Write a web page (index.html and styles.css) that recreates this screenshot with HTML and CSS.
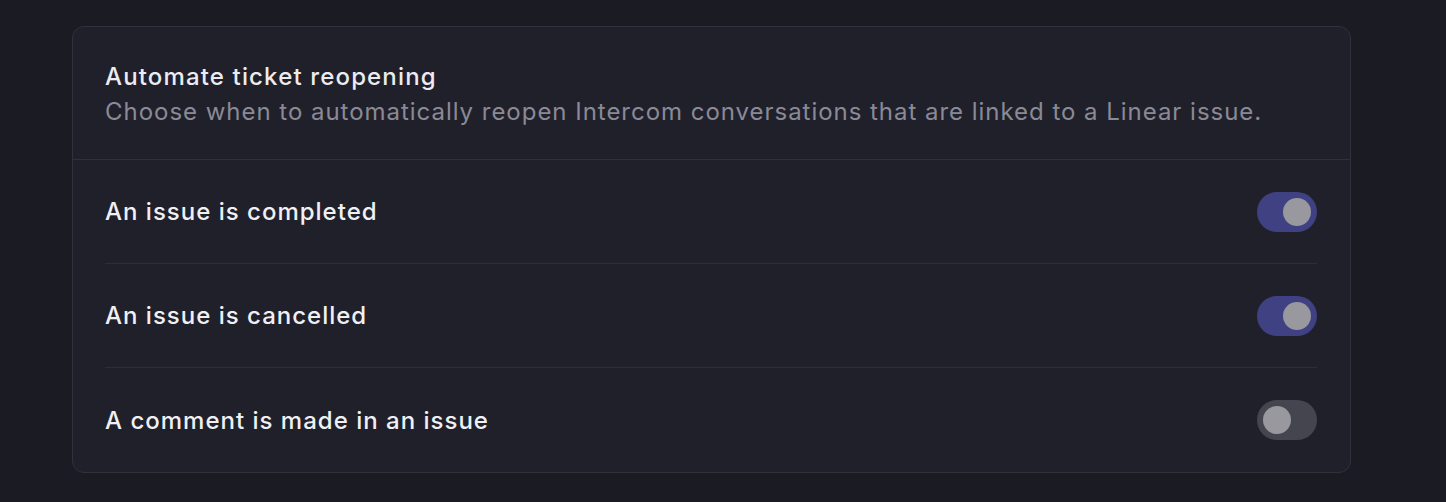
FILE: index.html
```html
<!DOCTYPE html>
<html>
<head>
<meta charset="utf-8">
<link rel="stylesheet" href="styles.css">
</head>
<body>
<div class="card">
  <div class="header">
    <div class="title">Automate ticket reopening</div>
    <div class="subtitle">Choose when to automatically reopen Intercom conversations that are linked to a Linear issue.</div>
  </div>
  <div class="rows">
    <div class="row">
      <span class="label">An issue is completed</span>
      <span class="toggle on"><span class="knob"></span></span>
    </div>
    <div class="row">
      <span class="label">An issue is cancelled</span>
      <span class="toggle on"><span class="knob"></span></span>
    </div>
    <div class="row">
      <span class="label">A comment is made in an issue</span>
      <span class="toggle"><span class="knob"></span></span>
    </div>
  </div>
</div>
</body>
</html>
```
FILE: styles.css
```css
html, body {
  margin: 0;
  padding: 0;
  background: #1b1b24;
}
body {
  font-family: Inter, "Noto Sans", sans-serif;
  padding-top: 26px;
  padding-left: 72px;
}
.card {
  box-sizing: border-box;
  width: 1279px;
  background: #20202b;
  border: 1px solid #31313e;
  border-radius: 12px;
}
.header {
  padding: 32px 32px 30px;
  border-bottom: 1px solid #31313e;
}
.title {
  color: #ececf0;
  font-size: 24px;
  font-weight: 450;
  letter-spacing: 1.15px;
  line-height: 35px;
}
.subtitle {
  color: #8a8a96;
  font-size: 24px;
  font-weight: 400;
  letter-spacing: 0.97px;
  line-height: 35px;
}
.rows {
  padding: 0 33px 0 32px;
}
.row {
  height: 103px;
  display: flex;
  align-items: center;
  justify-content: space-between;
  border-bottom: 1px solid #2e2e3a;
}
.row:last-child {
  border-bottom: none;
  height: 104px;
}
.label {
  color: #f0f0f4;
  font-size: 24px;
  font-weight: 450;
  letter-spacing: 1px;
}
.toggle {
  width: 60px;
  height: 40px;
  border-radius: 20px;
  background: #45454f;
  display: flex;
  align-items: center;
  padding: 0 6px;
  box-sizing: border-box;
}
.toggle.on {
  background: #3f4183;
  justify-content: flex-end;
}
.knob {
  width: 28px;
  height: 28px;
  border-radius: 50%;
  background: #98989e;
}
```
